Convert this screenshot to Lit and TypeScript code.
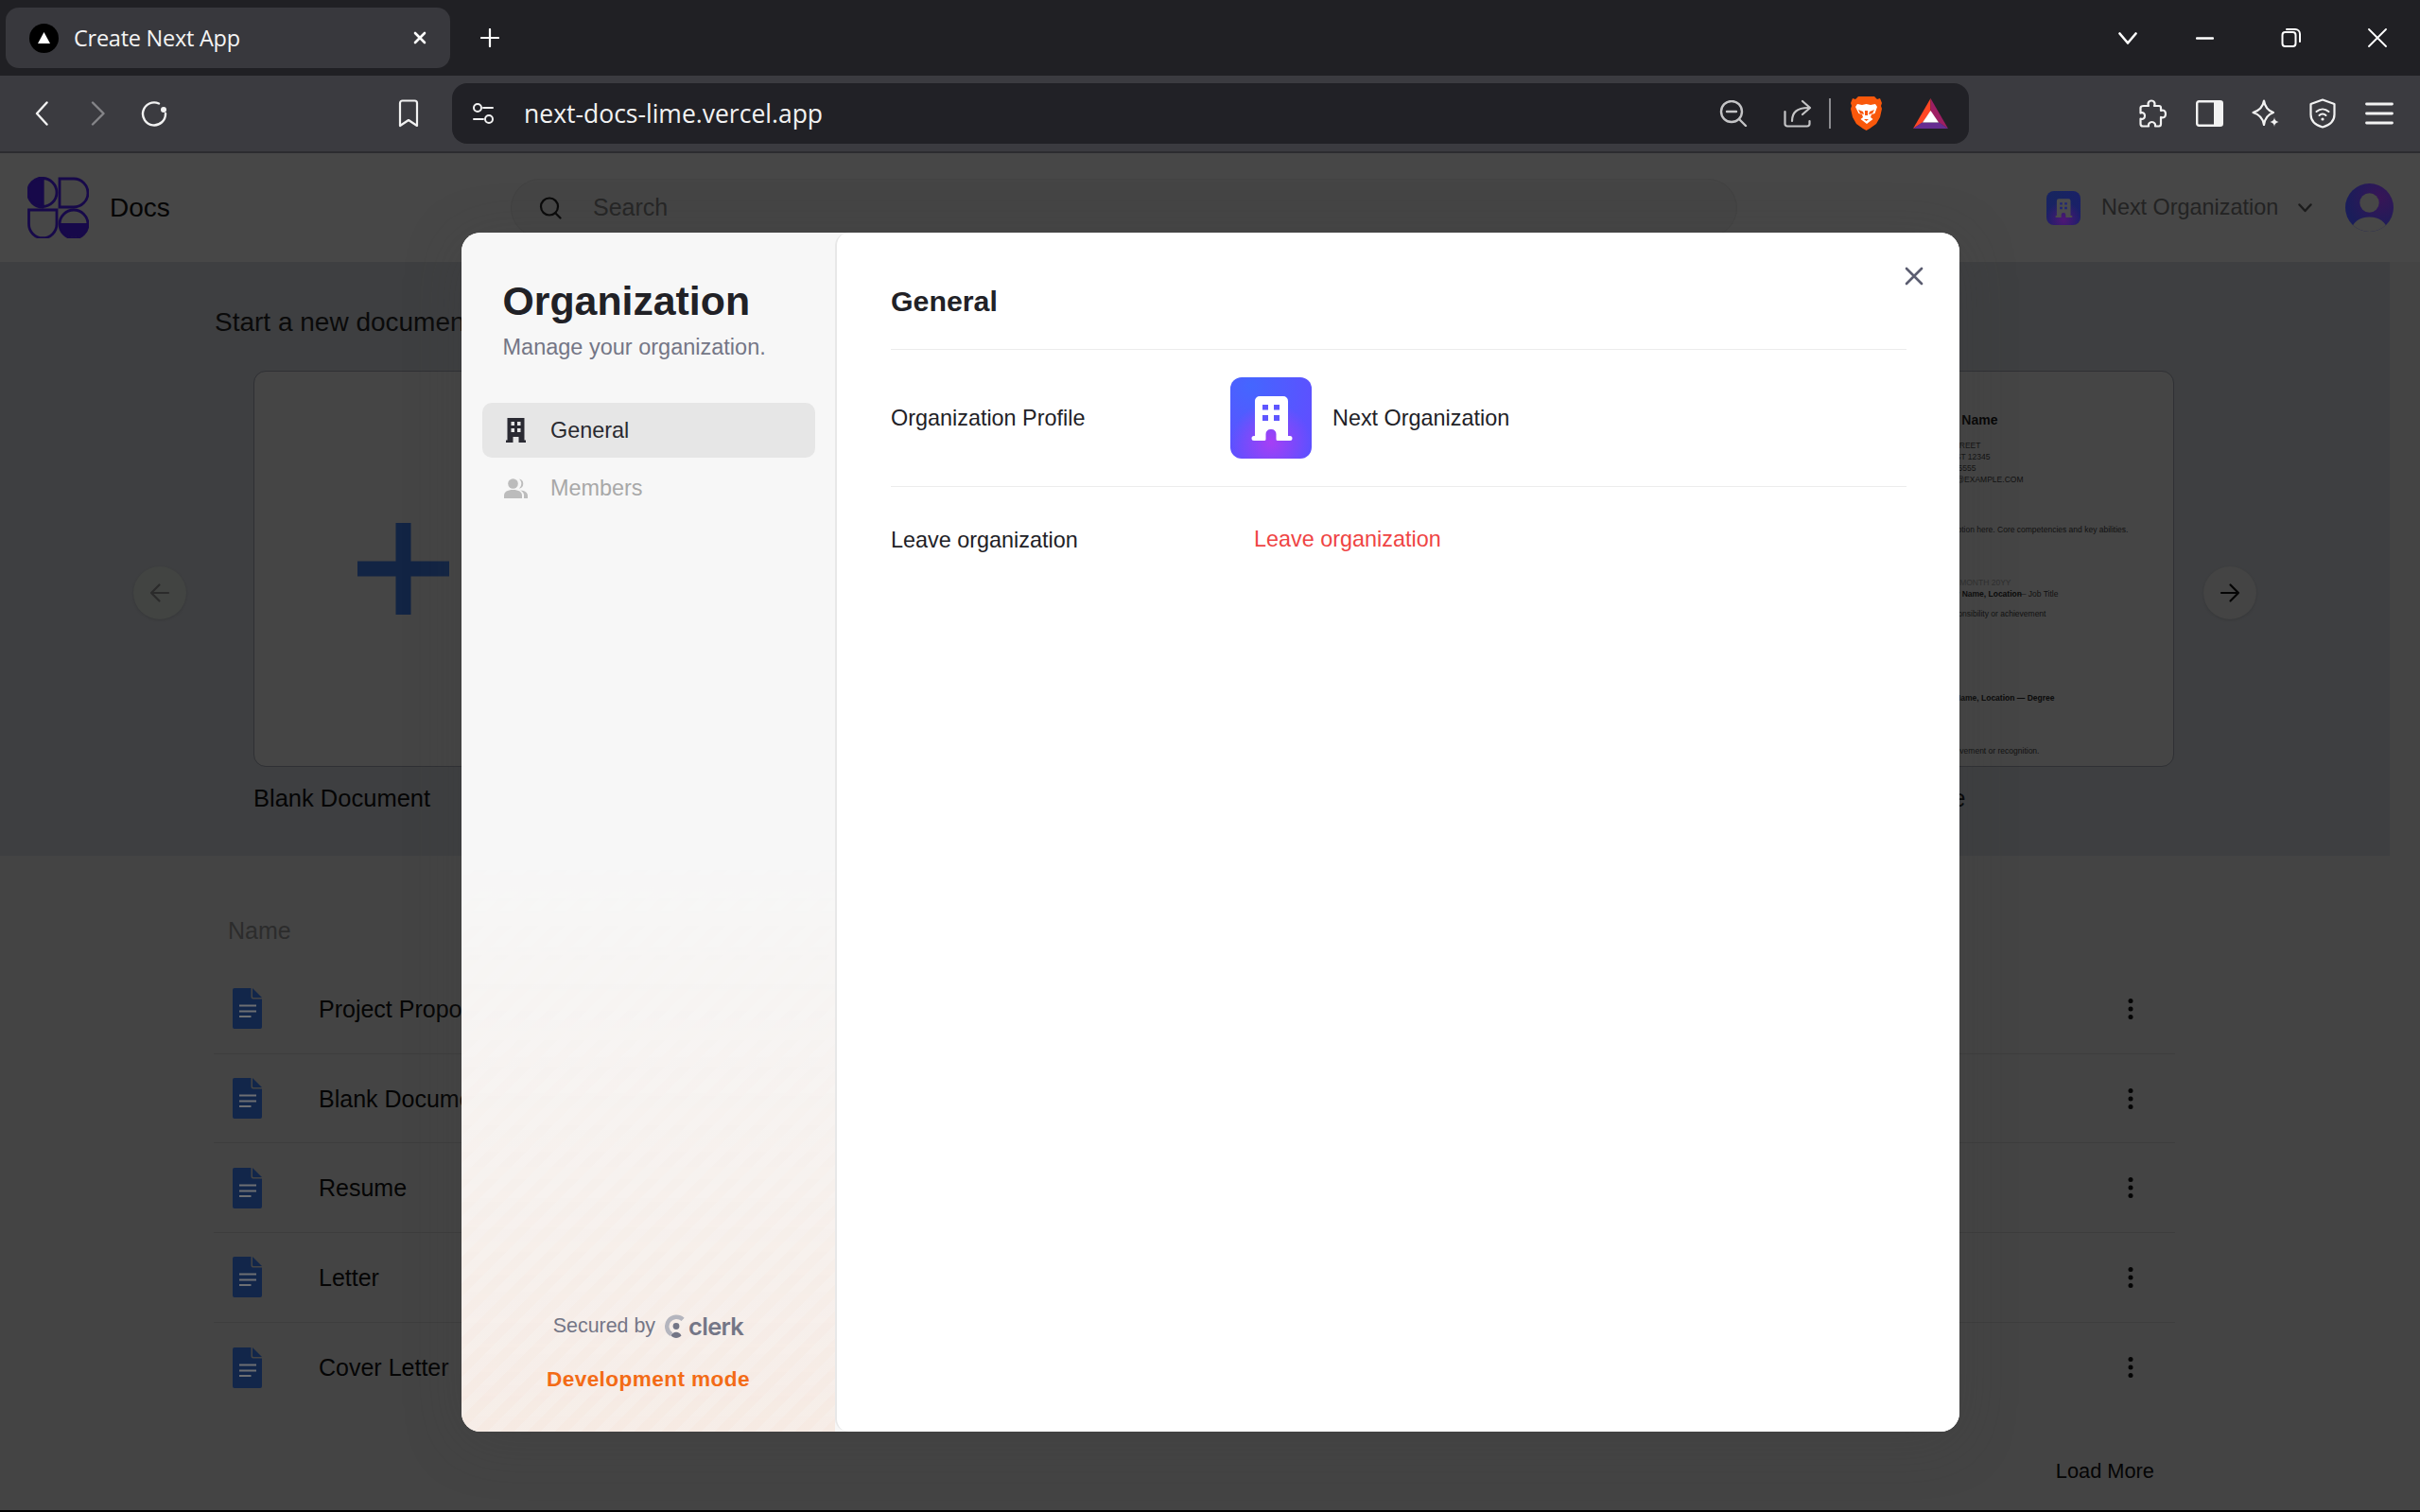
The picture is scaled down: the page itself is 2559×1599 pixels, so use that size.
import { LitElement, html, css, svg } from "lit";
import { customElement } from "lit/decorators.js";

const ICON = "#f2f2f2";

const building = (w: number, h: number, body: string, win: string) => html`<svg width=${w} height=${h} viewBox="0 0 86 86">
  <path fill=${body} d="M26 66V25a5 5 0 0 1 5-5h25a5 5 0 0 1 5 5v37h-.2h2.2a2 2 0 0 1 0 5H50a1.5 1.5 0 0 1-1.5-1.5V60a5 5 0 0 0-5-5h-1a5 5 0 0 0-5 5v5.5A1.5 1.5 0 0 1 36 67H25a2 2 0 0 1 0-5h1z"/>
  <path fill=${win} d="M34 29h6v5.500h-6zM46 29h6v5.500h-6zM34 40h6v6h-6zM46 40h6v6h-6z"/>
</svg>`;

const docIcon = html`<svg width="31" height="43" viewBox="0 0 31 43">
  <path fill="#12264a" d="M2 0h17.500v9.500a2 2 0 0 0 2 2H31V41a2 2 0 0 1-2 2H2a2 2 0 0 1-2-2V2a2 2 0 0 1 2-2z"/>
  <path fill="#12264a" d="M21 0l10 10h-9a1 1 0 0 1-1-1z"/>
  <path stroke="#6d6f73" stroke-width="2.200" d="M7 18.500h18M7 24.500h18M7 30h12.500"/>
</svg>`;

const dots = html`<svg width="6" height="22" viewBox="0 0 6 22" fill="#050505"><circle cx="3" cy="2.600" r="2.500"/><circle cx="3" cy="11" r="2.500"/><circle cx="3" cy="19.400" r="2.500"/></svg>`;

const DOC_LINES = [
  { cls: "nm", end: 128, mt: 43, t: html`Your Name` },
  { cls: "", end: 110, mt: 13, t: html`123 YOUR STREET` },
  { cls: "", end: 120, mt: 0, t: html`YOUR CITY, ST 12345` },
  { cls: "", end: 105, mt: 0, t: html`123.456.5555` },
  { cls: "", end: 155, mt: 0, t: html`NO_REPLY@EXAMPLE.COM` },
  { cls: "", end: 266, mt: 41, t: html`Skills description here. Core competencies and key abilities.` },
  { cls: "gr", end: 142, mt: 44, t: html`MONTH 20XX - MONTH 20YY` },
  { cls: "", end: 192, mt: 0, t: html`<b>Company Name, Location</b><span class="ov">— Job Title</span>` },
  { cls: "", end: 179, mt: 9, t: html`Key responsibility or achievement` },
  { cls: "", end: 188, mt: 77, t: html`<b>College Name, Location — Degree</b>` },
  { cls: "", end: 172, mt: 44, t: html`Notable achievement or recognition.` },
];

const ROWS = ["Project Proposal", "Blank Document", "Resume", "Letter", "Cover Letter"];

@customElement("app-root")
export class AppRoot extends LitElement {
  static styles = css`
    :host { display: block; width: 2559px; height: 1599px; position: relative; overflow: hidden; box-sizing: border-box; border-bottom: 2px solid #000; background: #444444; font-family: "Liberation Sans", Arial, sans-serif; color: #050505; }
    svg { display: block; flex: none; }
    .tabs { height: 80px; box-sizing: border-box; background: #202024; display: flex; align-items: center; padding: 8px 35px 8px 6px; }
    .tab { width: 470px; height: 64px; box-sizing: border-box; border-radius: 14px; background: #38383d; display: flex; align-items: center; padding: 0 25px; flex: none; }
    .fav { width: 31px; height: 31px; border-radius: 50%; background: #000; display: flex; align-items: center; justify-content: center; flex: none; }
    .tabtitle { margin-left: 16px; font: 400 23.500px "Open Sans", sans-serif; color: #f4f4f4; letter-spacing: -0.25px; white-space: nowrap; }
    .tabclose { margin-left: auto; }
    .newtab { margin-left: 32px; }
    .winctl { margin-left: auto; display: flex; align-items: center; }
    .toolbar { height: 82px; box-sizing: border-box; background: #3b3b40; border-bottom: 2px solid #2c2c30; display: flex; align-items: center; padding-left: 37px; }
    .url { width: 1604px; height: 64px; box-sizing: border-box; background: #212126; border-radius: 16px; display: flex; align-items: center; padding: 0 22px 0 21px; flex: none; }
    .urltext { margin-left: 31px; font: 400 26.500px "Open Sans", sans-serif; letter-spacing: 0; color: #f2f2f2; white-space: nowrap; }
    .urlend { margin-left: auto; display: flex; align-items: center; }
    .divider { width: 2px; height: 32px; background: #8b8b8f; flex: none; }
    .header { height: 115px; background: #474747; display: flex; align-items: center; padding-left: 29px; box-sizing: border-box; }
    .docs { margin-left: 22px; font-size: 28px; color: #050505; width: 64px; white-space: nowrap; }
    .search { margin-left: 360px; width: 1297px; height: 62px; box-sizing: border-box; border-radius: 31px; background: #454545; border: 1px solid #424242; display: flex; align-items: center; padding-left: 29px; flex: none; }
    .search span { margin-left: 33px; font-size: 25px; color: #262626; }
    .orgsw { margin-left: 327px; display: flex; align-items: center; flex: none; }
    .orgav { width: 36px; height: 36px; border-radius: 8px; display: flex; align-items: center; justify-content: center; background: radial-gradient(circle at 50% 85%, #4f1774 0%, transparent 55%), radial-gradient(circle at 25% 10%, #17255f 0%, transparent 80%), #1a1f6a; }
    .orgname { margin-left: 22px; font-size: 23.400px; color: #232323; white-space: nowrap; }
    .orgchev { margin-left: 21px; }
    .avatar { margin-left: 35px; width: 51px; height: 51px; flex: none; }
    .hero { width: 2527px; height: 628px; background: #3e3f41; box-sizing: border-box; padding-top: 44px; }
    .herot { margin-left: 227px; font-size: 28px; line-height: 40px; color: #0a0a0a; margin-bottom: 31px; white-space: nowrap; }
    .car { display: flex; align-items: center; padding-left: 141px; }
    .arrow { width: 56px; height: 56px; border-radius: 50%; flex: none; display: flex; align-items: center; justify-content: center; background: #444444; box-shadow: 0 1px 3px rgba(0,0,0,.12); }
    .arrow.off { background: #424442; }
    .cards { display: flex; gap: 27.100px; margin: 0 31px 0 71px; }
    .item { width: 316px; flex: none; }
    .card { height: 419px; box-sizing: border-box; border: 1px solid #2f3034; border-radius: 13px; background: #454545; display: flex; align-items: center; justify-content: center; overflow: hidden; }
    .card.doc { display: block; }
    .label { margin-top: 15px; font-size: 25.500px; line-height: 36px; color: #050505; white-space: nowrap; overflow: hidden; }
    .line { font-size: 8.500px; line-height: 12px; color: #111; text-align: right; white-space: nowrap; overflow: visible; }
    .line.nm { font-size: 14px; font-weight: 700; line-height: 16px; color: #050505; }
    .line.gr { color: #2f2f2f; }
    .line b { color: #0a0a0a; }
    .ov { margin-left: -4px; }
    .list { margin: 0 259px 0 226px; padding-top: 60px; }
    .lh { padding-left: 15px; font-size: 25px; line-height: 38px; color: #2c2c2c; margin-bottom: 17px; }
    .row { height: 94.700px; box-sizing: border-box; border-bottom: 1px solid #3d3d3d; display: flex; align-items: center; padding: 0 44px 0 20px; }
    .row.last { border-bottom: none; }
    .row .n { margin-left: 60px; padding-top: 1px; font-size: 25px; color: #050505; white-space: nowrap; }
    .row svg:last-child { margin-left: auto; }
    .more { margin-top: 45px; text-align: right; padding-right: 22px; font-size: 21.800px; line-height: 36px; color: #050505; }

    .modal { position: absolute; left: 488px; top: 246px; width: 1584px; height: 1268px; border-radius: 20px; overflow: hidden; display: flex; background: #f7f7f7; box-shadow: 0 10px 60px rgba(60,60,60,.25); color: #212126; }
    .side { width: 395px; flex: none; position: relative; box-sizing: border-box; padding-top: 47px; display: flex; flex-direction: column; background: #f7f7f7; }
    .side::after { content: ""; position: absolute; inset: 0; background: repeating-linear-gradient(-45deg, rgba(243,107,22,.085) 0 10px, rgba(243,107,22,.068) 10px 20px); -webkit-mask-image: linear-gradient(to top, #000 0%, rgba(0,0,0,.5) 22%, transparent 48%); mask-image: linear-gradient(to top, #000 0%, rgba(0,0,0,.5) 22%, transparent 48%); }
    .side > * { position: relative; z-index: 1; }
    .h1 { margin-left: 43.500px; font-size: 42.800px; line-height: 50px; font-weight: 700; white-space: nowrap; }
    .sub { margin: 7px 0 0 43.500px; font-size: 23.500px; line-height: 34px; color: #747686; white-space: nowrap; }
    .nav { margin: 42px 21px 0 22px; display: flex; flex-direction: column; gap: 3px; }
    .ni { height: 58px; border-radius: 10px; display: flex; align-items: center; padding-left: 22px; font-size: 23.400px; color: #2a2a30; }
    .ni.on { background: #e6e6e6; }
    .ni.dim { color: #a8a8a8; }
    .nib { width: 26px; flex: none; display: flex; justify-content: center; margin-right: 24px; }
    .foot { margin-top: auto; padding-bottom: 38px; display: flex; flex-direction: column; align-items: center; }
    .sec { height: 34px; display: flex; align-items: center; font-size: 21.400px; color: #747686; white-space: nowrap; }
    .clerk { margin-left: 10px; }
    .clerkt { margin-left: 1px; font: 600 25.500px "Inter", sans-serif; letter-spacing: -0.7px; color: #747686; }
    .dev { margin-top: 23px; line-height: 34px; font-size: 22.600px; font-weight: 700; color: #f36b16; letter-spacing: 0.42px; white-space: nowrap; }
    .main { flex: 1; position: relative; box-sizing: border-box; background: #fff; border-left: 2px solid #e8e8e8; border-radius: 14px 0 0 14px; padding: 51px 56px 0 57px; }
    .close { position: absolute; top: 35px; right: 37px; }
    .mh { font-size: 30.300px; line-height: 44px; font-weight: 700; padding-bottom: 28px; border-bottom: 1px solid #ececec; }
    .mr { display: flex; font-size: 23.400px; }
    .mr.one { height: 145px; box-sizing: border-box; align-items: center; border-bottom: 1px solid #ececec; }
    .mr.two { padding-top: 38px; line-height: 34px; }
    .mr.two .ml { padding-top: 1px; }
    .ml { width: 359px; flex: none; white-space: nowrap; }
    .av86 { width: 86px; height: 86px; border-radius: 12px; display: flex; align-items: center; justify-content: center; background: radial-gradient(circle at 50% 80%, #a63ff5 0%, rgba(166,63,245,0) 52%), radial-gradient(circle at 25% 10%, #4466ff 0%, rgba(68,102,255,0) 70%), #5e50ff; flex: none; }
    .vn { margin-left: 22px; white-space: nowrap; }
    .leave { margin-left: 25px; color: #ef4444; white-space: nowrap; }
  `;

  private ic(w: number, h: number, content: unknown) {
    return html`<svg width=${w} height=${h} viewBox="0 0 ${w} ${h}" fill="none" stroke=${ICON} stroke-width="2.400" stroke-linecap="round" stroke-linejoin="round">${content}</svg>`;
  }

  private gap(w: number) {
    return html`<div style="width:${w}px;flex:none"></div>`;
  }

  private chrome() {
    return html`
      <div class="tabs">
        <div class="tab">
          <div class="fav"><svg width="13" height="12" viewBox="0 0 13 12"><path fill="#fff" d="M6.500 0L13 12H0z"/></svg></div>
          <span class="tabtitle">Create Next App</span>
          <svg class="tabclose" width="14" height="14" viewBox="0 0 14 14" stroke="#fff" stroke-width="2.600" stroke-linecap="round"><path d="M2 2l10 10M12 2L2 12"/></svg>
        </div>
        <svg class="newtab" width="20" height="20" viewBox="0 0 20 20" stroke="#fff" stroke-width="2.200" stroke-linecap="round"><path d="M10 1v18M1 10h18"/></svg>
        <div class="winctl">
          ${this.ic(20, 13, svg`<path d="M1.500 1.500L10 11.500L18.500 1.500" stroke="#fff" stroke-width="2.600"/>`)}
          ${this.gap(62)}
          ${this.ic(19, 3, svg`<path d="M1 1.500h17" stroke="#fff"/>`)}
          ${this.gap(71)}
          ${this.ic(21, 20, svg`<rect x="1.500" y="4" width="14" height="15" rx="3" stroke="#fff" stroke-width="2"/><path d="M6 1h9a5 5 0 0 1 5 5v8" stroke="#fff" stroke-width="2"/>`)}
          ${this.gap(71)}
          ${this.ic(20, 20, svg`<path d="M1 1l18 18M19 1L1 19" stroke="#fff" stroke-width="1.800"/>`)}
        </div>
      </div>
      <div class="toolbar">
        ${this.ic(14, 26, svg`<path d="M12.500 1.500L2 13l10.500 11.500"/>`)}
        ${this.gap(45)}
        ${this.ic(16, 26, svg`<path d="M2 1.500L13.500 13 2 24.500" stroke="#858589"/>`)}
        ${this.gap(37)}
        ${this.ic(30, 28, svg`<path d="M19 3.500A12 12 0 1 0 26 14"/><circle cx="24" cy="10" r="3" fill="#f2f2f2" stroke="none"/>`)}
        ${this.gap(242)}
        ${this.ic(22, 30, svg`<path d="M2 4a2.500 2.500 0 0 1 2.500-2.500h13A2.500 2.500 0 0 1 20 4v24l-9-6-9 6z" stroke-width="2.200"/>`)}
        ${this.gap(35)}
        <div class="url">
          ${this.ic(24, 24, svg`<circle cx="6" cy="6" r="4" stroke-width="2"/><path d="M12 6h10M2 18h10" stroke-width="2"/><circle cx="18" cy="18" r="4" stroke-width="2"/>`)}
          <span class="urltext">next-docs-lime.vercel.app</span>
          <div class="urlend">
            ${this.ic(30, 28, svg`<circle cx="13" cy="12" r="11" stroke="#c4c4c6"/><path d="M8 12h10M21 20l7 7" stroke="#c4c4c6"/>`)}
            ${this.gap(38)}
            ${this.ic(30, 30, svg`<path d="M1.500 13v13a2.500 2.500 0 0 0 2.500 2.500h21a2.500 2.500 0 0 0 2.500-2.500v-3M9 23c0-9 5-14 17-14" stroke="#c4c4c6" stroke-width="2.200"/><path d="M20 2l8 7-8 7" stroke="#c4c4c6" stroke-width="2.200"/>`)}
            ${this.gap(18)}
            <div class="divider"></div>
            ${this.gap(21)}
            <svg width="33" height="36" viewBox="0 0 33 36">
              <path fill="#f9580b" d="M8 0h17l3 3 3-1 2 5-1 3 1 3-2 9-4 7-7 5-3.500 2-3.500-2-7-5-4-7-2-9 1-3-1-3 2-5 3 1z"/>
              <path fill="#fff" d="M7 8l5 1 4.500-1 4.500 1 5-1 2 3-2.500 7-3.500 1-1 3 2.500 2-6.500 5-6.500-5 2.500-2-1-3-3.500-1L5 11z"/>
              <path fill="#f9580b" d="M8 14l5 2 1 3-4-1zM25 14l-5 2-1 3 4-1zM14 24h5l-2.500 2zM15 15h3v5h-3z"/>
            </svg>
            ${this.gap(33)}
            <svg width="37" height="32" viewBox="0 0 37 32">
              <path fill="#ff4724" d="M18.500 0v14L10 25.500 0 32z"/>
              <path fill="#9e1f63" d="M18.500 0L37 32l-10-6.500-8.500-11.500z"/>
              <path fill="#662d91" d="M0 32l9.500-6.500h18L37 32z"/>
              <path fill="#fff" d="M18.500 13L27 25.500H10z"/>
            </svg>
          </div>
        </div>
        ${this.gap(180)}
        ${this.ic(29, 30, svg`<path d="M5 7H10C9 5 9.500 1.500 13 1.500C16.500 1.500 17 5 16 7H21Q23 7 23 9V12C25 11 28 11.500 28 15.500C28 19.500 25 20 23 19V26Q23 28.500 21 28.500H17C17.500 26 16 24 13.500 24C11 24 9.500 26 10 28.500H4Q1.500 28.500 1.500 26V20.500C4 21.500 6 20 6 17.500C6 15 4 13.500 1.500 14.500V9Q1.500 7 5 7Z" stroke-width="2.200"/>`)}
        ${this.gap(31)}
        ${this.ic(29, 28, svg`<rect x="1.200" y="1.200" width="26.600" height="25.600" rx="2" stroke-width="2.400"/><path d="M19 1.500h7.500a1 1 0 0 1 1 1v23a1 1 0 0 1-1 1H19z" fill="#f2f2f2" stroke="none"/>`)}
        ${this.gap(30)}
        ${this.ic(30, 30, svg`<path d="M13 1.500C14 8 17 12 23 14C17 16 14 20 13 27C12 20 8 16 1.500 14C8 12 12 8 13 1.500Z" stroke-width="2.200"/><path d="M24 19c.3 3 1.500 4.300 4.500 5-3 .7-4.200 2-4.500 5-.3-3-1.500-4.300-4.500-5 3-.7 4.200-2 4.500-5z" fill="#f2f2f2" stroke="none"/>`)}
        ${this.gap(31)}
        ${this.ic(28, 32, svg`<path d="M14 1.500L26.500 6V17C26.500 24 21 28.500 14 30.500C7 28.500 1.500 24 1.500 17V6Z" stroke-width="2.200"/><path d="M7.500 14c4-3.500 9-3.500 13 0M10.500 18c2-2 5-2 7 0" stroke-width="2"/><circle cx="14" cy="22" r="1.600" fill="#f2f2f2" stroke="none"/>`)}
        ${this.gap(31)}
        ${this.ic(30, 24, svg`<path d="M1.500 2h27M1.500 12h27M1.500 22h27" stroke-width="2.800"/>`)}
      </div>`;
  }

  private pageHeader() {
    return html`<div class="header">
      <svg width="65" height="65" viewBox="0 0 65 65" fill="none" stroke="#17094a" stroke-width="2.800">
        <path d="M16 1.500a15 15 0 0 1 0 30V1.500z"/>
        <path d="M16 1a15.500 15.500 0 0 0 0 31z" fill="#17094a"/>
        <path d="M34 2h15a15 15 0 0 1 0 30H34z"/>
        <path d="M1.500 35H31v15a14.700 14.700 0 0 1-29.500 0z"/>
        <circle cx="49" cy="50" r="15"/>
        <path d="M34 49h30a15 15 0 0 1-30 0z" fill="#17094a" stroke="none" />
      </svg>
      <span class="docs">Docs</span>
      <div class="search">
        <svg width="24" height="24" viewBox="0 0 24 24" fill="none" stroke="#0a0a0a" stroke-width="2.200" stroke-linecap="round"><circle cx="11" cy="10.500" r="9"/><path d="M17.500 17.500l5 5"/></svg>
        <span>Search</span>
      </div>
      <div class="orgsw">
        <div class="orgav">${building(36, 36, "#4c4c4c", "#1e2478")}</div>
        <span class="orgname">Next Organization</span>
        <svg class="orgchev" width="15" height="10" viewBox="0 0 15 10" fill="none" stroke="#1c1c1c" stroke-width="2.400" stroke-linecap="round" stroke-linejoin="round"><path d="M1.500 1.500l6 6.500 6-6.500"/></svg>
      </div>
      <svg class="avatar" viewBox="0 0 51 51">
        <defs>
          <radialGradient id="ag" cx=".72" cy=".3" r=".7"><stop offset="0" stop-color="#381556"/><stop offset="1" stop-color="#1a1d5a"/></radialGradient>
          <clipPath id="ac"><circle cx="25.500" cy="25.500" r="25.500"/></clipPath>
        </defs>
        <circle cx="25.500" cy="25.500" r="25.500" fill="url(#ag)"/>
        <g clip-path="url(#ac)" fill="#474747">
          <circle cx="25.500" cy="20.500" r="10.200"/>
          <path d="M6 51c1-10 9-15.500 19.500-15.500S44 41 45 51z"/>
        </g>
      </svg>
    </div>`;
  }

  private hero() {
    return html`<div class="hero">
      <div class="herot">Start a new document</div>
      <div class="car">
        <div class="arrow off"><svg width="22" height="22" viewBox="0 0 22 22" fill="none" stroke="#2b2b2b" stroke-width="2.200" stroke-linecap="round" stroke-linejoin="round"><path d="M20 11H2M10.500 2.500L2 11l8.500 8.500"/></svg></div>
        <div class="cards">
          <div class="item">
            <div class="card"><svg width="97" height="97" viewBox="0 0 97 97"><path fill="#122444" d="M40.500 0h16v40.500H97v16H56.500V97h-16V56.500H0v-16h40.500z"/></svg></div>
            <div class="label">Blank Document</div>
          </div>
          ${["Project Proposal", "Business Letter", "Cover Letter", "Letter"].map((n) => html`<div class="item"><div class="card"></div><div class="label">${n}</div></div>`)}
          <div class="item">
            <div class="card doc">
              ${DOC_LINES.map((l) => html`<div class="line ${l.cls}" style="width:${l.end}px;margin-top:${l.mt}px">${l.t}</div>`)}
            </div>
            <div class="label">Resume</div>
          </div>
        </div>
        <div class="arrow"><svg width="22" height="22" viewBox="0 0 22 22" fill="none" stroke="#050505" stroke-width="2.200" stroke-linecap="round" stroke-linejoin="round"><path d="M2 11h18M11.500 2.500L20 11l-8.500 8.500"/></svg></div>
      </div>
    </div>`;
  }

  private list() {
    return html`<div class="list">
      <div class="lh">Name</div>
      ${ROWS.map((r, i) => html`<div class="row ${i === ROWS.length - 1 ? "last" : ""}">${docIcon}<span class="n">${r}</span>${dots}</div>`)}
      <div class="more">Load More</div>
    </div>`;
  }

  private modal() {
    return html`<div class="modal">
      <div class="side">
        <div class="h1">Organization</div>
        <div class="sub">Manage your organization.</div>
        <div class="nav">
          <div class="ni on">
            <div class="nib"><svg width="21" height="26" viewBox="0 0 21 26"><path fill="#2b2b33" fill-rule="evenodd" d="M1.500 0h18v23.500H21V26h-7.500v-6h-6v6H0v-2.500h1.500zM5.500 4v4h3.500V4zM12 4v4h3.500V4zM5.500 11v4h3.500v-4zM12 11v4h3.500v-4z"/></svg></div>
            General
          </div>
          <div class="ni dim">
            <div class="nib"><svg width="25" height="21" viewBox="0 0 25 21" fill="#bcbcbc"><circle cx="9.500" cy="5.500" r="5.300"/><path d="M16 .4a5.300 5.300 0 0 1 0 10.400 7 7 0 0 0 0-10.400z"/><path d="M0 21v-3c0-3.800 3.500-6 9.500-6s9.500 2.200 9.500 6v3z"/><path d="M17 12.500c5 .3 8 2.500 8 5.500v3h-4v-3.500c0-2-1.500-3.800-4-5z"/></svg></div>
            Members
          </div>
        </div>
        <div class="foot">
          <div class="sec">Secured by
            <svg class="clerk" width="24" height="25" viewBox="0 0 24 25">
              <path d="M19.100 5.400A10 10 0 1 0 7 21.200" fill="none" stroke="#b4b5be" stroke-width="4.500"/>
              <circle cx="12" cy="12.500" r="3.400" fill="#747686"/>
              <path d="M6.500 22.500c1.200-2.600 3-3.800 5.500-3.800s4.300 1.200 5.500 3.800c-1.500 1.500-3.400 2.400-5.500 2.400s-4-.9-5.500-2.400z" fill="#747686"/>
            </svg>
            <span class="clerkt">clerk</span>
          </div>
          <div class="dev">Development mode</div>
        </div>
      </div>
      <div class="main">
        <svg class="close" width="22" height="22" viewBox="0 0 22 22" stroke="#5b5d70" stroke-width="2.600" stroke-linecap="round"><path d="M3 3l16 16M19 3L3 19"/></svg>
        <div class="mh">General</div>
        <div class="mr one">
          <div class="ml">Organization Profile</div>
          <div class="av86">${building(86, 86, "#ffffff", "#5f56ff")}</div>
          <div class="vn">Next Organization</div>
        </div>
        <div class="mr two">
          <div class="ml">Leave organization</div>
          <div class="leave">Leave organization</div>
        </div>
      </div>
    </div>`;
  }

  render() {
    return html`${this.chrome()}${this.pageHeader()}${this.hero()}${this.list()}${this.modal()}`;
  }
}
